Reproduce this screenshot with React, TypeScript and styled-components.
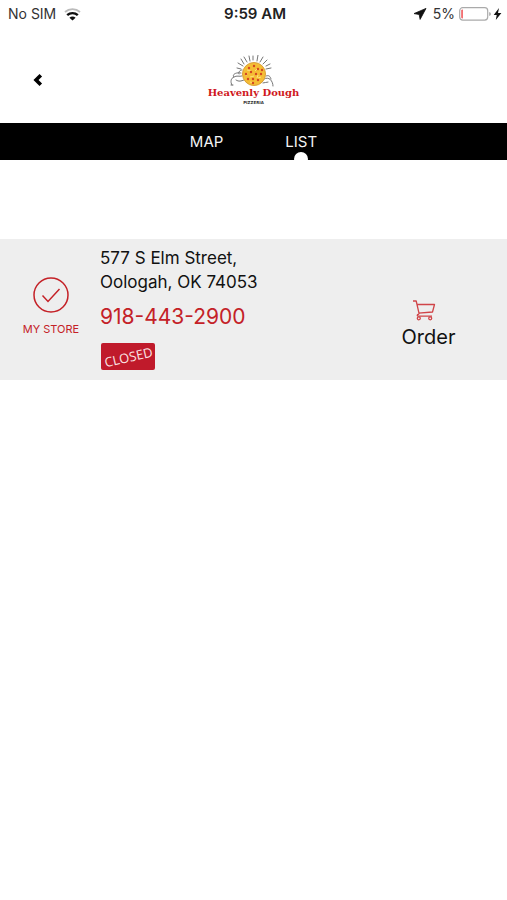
import React, { useState } from "react";
import styled, { createGlobalStyle } from "styled-components";

const red = "#c42127";

const GlobalStyle = createGlobalStyle`
  * { box-sizing: border-box; }
  body {
    margin: 0;
    background: #fff;
    color: #111;
    font-family: Inter, "Liberation Sans", sans-serif;
  }
  button { font: inherit; border: 0; padding: 0; background: none; cursor: pointer; }
  svg { display: block; flex: none; }
`;

const StatusBar = styled.div`
  display: grid;
  grid-template-columns: 1fr auto 1fr;
  align-items: center;
  height: 28px;
  padding: 0 5px 0 8px;
  font-size: 14px;
  line-height: 20px;
`;

const StatusGroup = styled.div<{ $end?: boolean }>`
  display: flex;
  align-items: center;
  justify-content: ${(p) => (p.$end ? "flex-end" : "flex-start")};
  gap: ${(p) => (p.$end ? 4 : 8)}px;
  color: #333;
`;

const Clock = styled.time`
  font-size: 15px;
  font-weight: 600;
  color: #222;
`;

const Power = styled.div`
  display: flex;
  align-items: center;
  gap: 2px;
`;

const Header = styled.header`
  display: grid;
  grid-template-columns: 1fr auto 1fr;
  align-items: center;
  height: 95px;
`;

const BackButton = styled.button`
  display: grid;
  place-items: center;
  width: 28px;
  height: 28px;
  margin: 9px 0 0 24px;
  color: #000;
`;

const Logo = styled.div`
  display: flex;
  flex-direction: column;
  align-items: center;
  padding-top: 10px;
`;

const LogoName = styled.span`
  font: bold 10px/12px "DejaVu Serif", serif;
  color: #cf171c;
  white-space: nowrap;
`;

const LogoSub = styled.span`
  font: bold 4px/8px "DejaVu Sans", sans-serif;
  color: #333;
`;

const Tabs = styled.nav`
  display: flex;
  justify-content: center;
  gap: 62px;
  height: 37px;
  background: #000;
`;

const Tab = styled.button<{ $active: boolean }>`
  position: relative;
  color: #f4f4f4;
  font-size: 15px;
  line-height: 37px;

  &::after {
    content: "";
    display: ${(p) => (p.$active ? "block" : "none")};
    position: absolute;
    left: 50%;
    bottom: -6px;
    width: 14px;
    height: 14px;
    margin-left: -7px;
    border-radius: 50%;
    background: #fff;
  }
`;

const StoreList = styled.ul`
  list-style: none;
  margin: 79px 0 0;
  padding: 0;
`;

const StoreRow = styled.li`
  display: grid;
  grid-template-columns: 100px 1fr 157px;
  min-height: 141px;
  background: #eee;
`;

const MyStore = styled.button`
  display: flex;
  flex-direction: column;
  align-items: center;
  align-self: start;
  gap: 6px;
  padding: 38px 0 0 2px;
  color: ${red};
  font-size: 11px;
  line-height: 20px;
`;

const Details = styled.div`
  display: flex;
  flex-direction: column;
  align-items: flex-start;
  padding: 7px 0 9px;
`;

const Address = styled.address`
  font-style: normal;
  font-size: 17px;
  line-height: 24px;
`;

const Phone = styled.a`
  margin: 7px 0 11px;
  color: ${red};
  font-size: 21px;
  line-height: 31px;
  text-decoration: none;
`;

const Closed = styled.span`
  display: grid;
  place-items: center;
  width: 54px;
  height: 27px;
  margin-left: 1px;
  border-radius: 2px;
  background: #c01a2b;
  color: #fbe6e6;
  font: 13px/14px "Open Sans", sans-serif;
`;

const Stamp = styled.span`
  transform: rotate(-13deg);
`;

const Order = styled.button`
  display: flex;
  flex-direction: column;
  align-items: center;
  align-self: start;
  justify-self: center;
  gap: 2px;
  padding-top: 61px;
  color: #111;
  font-size: 20px;
  line-height: 28px;

  svg { margin-right: 9px; }
`;

function Wifi() {
  return (
    <svg width="17" height="13" viewBox="0 0 17 13" fill="none">
      <path d="M1 4C5.2.2 11.8.2 16 4" stroke="#bbb" strokeWidth="1.8" />
      <path d="M3.2 7.2c3-2.8 7.6-2.8 10.6 0" stroke="#111" strokeWidth="2.4" />
      <path d="M5.4 9.8c1.8-1.6 4.4-1.6 6.2 0L8.5 12.6z" fill="#111" />
    </svg>
  );
}

function LogoMark() {
  const pepperoni = [[19, 13], [24, 11], [28, 14], [21, 17], [26, 19], [31, 19], [16, 19], [18, 24], [23, 24], [28, 25], [23, 28], [32, 15]];
  return (
    <svg width="46" height="32" viewBox="0 0 46 32" fill="none">
      <g stroke="#666" strokeWidth="0.9" strokeLinecap="round">
        <path d="M13 11 8 8m6 1-3-5m6 3-3-5m6 4-1-5m4 4V1m4 5 1-6m2 7 3-5m0 7 4-4m-1 6 4-2m-4 5 5-1M11 14l-4-1" />
        <path d="M12 15c-2 0-4 2-3 4M11 18c-6-1-9 2-7 4-3 1-4 5-2 8M4 22c3-2 5 0 8-1M6 25c3 2 5 1 8 0M34 24c5-3 9 2 9 7M36 21c3-1 4 0 5 3M33 28c2 0 3-1 5-1M1 30h2" />
      </g>
      <circle cx="24" cy="19" r="11.5" fill="#f5bd35" stroke="#d9a03c" strokeWidth="1" />
      <path d="m17 15 4 1m4 0 2-2m-7 8 4-1m4 2 3-1m-11 5 4 1m3-5 1-3m-12 1 1-3" stroke="#ffe17a" strokeWidth="1" />
      {pepperoni.map(([x, y]) => (
        <circle key={`${x}-${y}`} cx={x} cy={y} r="1.2" fill="#d34722" />
      ))}
    </svg>
  );
}

export default function App() {
  const [tab, setTab] = useState("LIST");
  return (
    <>
      <GlobalStyle />
      <StatusBar>
        <StatusGroup>
          No SIM
          <Wifi />
        </StatusGroup>
        <Clock>9:59 AM</Clock>
        <StatusGroup $end>
          <svg width="17" height="12" viewBox="0 0 17 12">
            <path d="M14 0.4 2 5.6l5.2.9.9 4.9z" fill="#111" stroke="#111" strokeWidth="0.8" strokeLinejoin="round" />
          </svg>
          5%
          <Power>
            <svg width="32" height="14" viewBox="0 0 32 14">
              <rect x="0.7" y="0.7" width="28" height="12.4" rx="3" fill="#fff" stroke="#aaa" strokeWidth="1.2" />
              <path d="M2.3 3.5q0-1 1.5-1v9q-1.5 0-1.5-1z" fill="#f04d50" />
              <path d="M30.3 5q1.5.6 1.5 2t-1.5 2z" fill="#999" />
            </svg>
            <svg width="9" height="12" viewBox="0 0 9 12">
              <path d="M6 0 .7 7h3L2.8 12 8.4 5H5z" fill="#111" />
            </svg>
          </Power>
        </StatusGroup>
      </StatusBar>
      <Header>
        <BackButton aria-label="Back">
          <svg width="10" height="14" viewBox="0 0 10 14">
            <path d="M7.8 2.2 3 7l4.8 4.8" fill="none" stroke="currentColor" strokeWidth="3.6" />
          </svg>
        </BackButton>
        <Logo>
          <LogoMark />
          <LogoName>Heavenly Dough</LogoName>
          <LogoSub>PIZZERIA</LogoSub>
        </Logo>
      </Header>
      <Tabs>
        {["MAP", "LIST"].map((name) => (
          <Tab key={name} $active={tab === name} onClick={() => setTab(name)}>
            {name}
          </Tab>
        ))}
      </Tabs>
      <StoreList>
        <StoreRow>
          <MyStore>
            <svg width="36" height="36" viewBox="0 0 36 36" fill="none" stroke="currentColor" strokeWidth="1.5">
              <circle cx="18" cy="18" r="17" />
              <path d="m9.5 18.5 5.5 6 11.5-12.5" />
            </svg>
            MY STORE
          </MyStore>
          <Details>
            <Address>
              577 S Elm Street,
              <br />
              Oologah, OK 74053
            </Address>
            <Phone href="tel:9184432900">918-443-2900</Phone>
            <Closed>
              <Stamp>CLOSED</Stamp>
            </Closed>
          </Details>
          <Order>
            <svg width="24" height="21" viewBox="0 0 24 21" fill="none" stroke="#d04448" strokeWidth="1.3" strokeLinejoin="round">
              <path d="M1 1h3.2l3 13.2M5 4.5h17.5l-2 7.5-14 1.2M7.2 14.2q-2 0-2 1t1.5 1H20" />
              <circle cx="6.8" cy="18.3" r="1.5" />
              <circle cx="18.2" cy="18.3" r="1.5" />
            </svg>
            Order
          </Order>
        </StoreRow>
      </StoreList>
    </>
  );
}
